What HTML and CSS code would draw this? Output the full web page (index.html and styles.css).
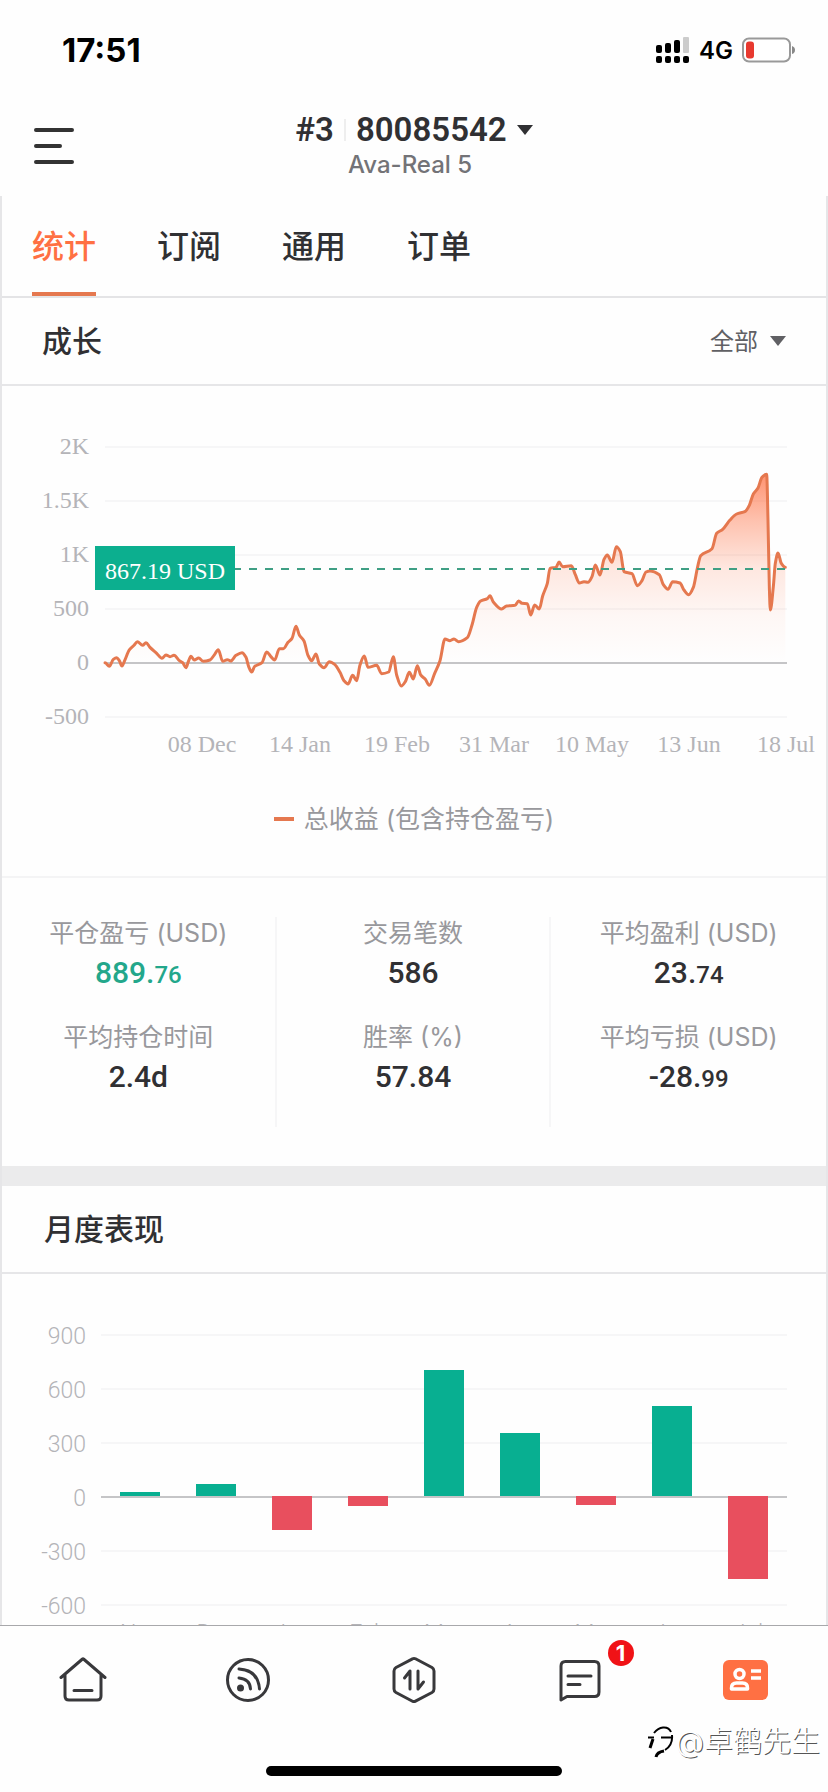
FILE: index.html
```html
<!DOCTYPE html>
<html lang="zh-CN">
<head>
<meta charset="utf-8">
<meta name="viewport" content="width=device-width, initial-scale=1">
<title>80085542 统计</title>
<link rel="stylesheet" href="styles.css">
</head>
<body>
<div class="status">
  <time class="clock">17:51</time>
  <div class="status-right">
    <svg width="34" height="28" viewBox="0 0 34 28" aria-hidden="true">
      <g fill="#000"><rect x="0" y="9" width="6" height="8" rx="2"/><rect x="9" y="7" width="6" height="10" rx="2"/><rect x="18" y="4" width="6" height="13" rx="2"/>
      <rect x="0" y="20" width="6" height="7" rx="2"/><rect x="9" y="20" width="6" height="7" rx="2"/><rect x="18" y="20" width="6" height="7" rx="2"/><rect x="27" y="20" width="6" height="7" rx="2"/></g>
      <rect x="27" y="1" width="6" height="16" rx="1" fill="#ccc"/>
    </svg>
    <span class="network">4G</span>
    <svg width="54" height="26" viewBox="0 0 54 26" aria-hidden="true">
      <rect x="1" y="1.5" width="47" height="23" rx="6" fill="#fff" stroke="#999" stroke-width="2"/>
      <rect x="4" y="4.500" width="8" height="17" rx="3" fill="#e8392f"/>
      <path d="M50 9q3 1 3 4t-3 4z" fill="#888"/>
    </svg>
  </div>
</div>

<header class="header">
  <button class="menu" aria-label="菜单">
    <svg width="40" height="36" viewBox="0 0 40 36" fill="none" stroke="#333" stroke-width="4" stroke-linecap="round"><path d="M2 2h36M2 18h24M2 34h36"/></svg>
  </button>
  <div class="account">
    <button class="account-pick"><span>#3</span><i class="bar"></i><span>80085542</span><svg class="arrow" width="16" height="10" viewBox="0 0 16 10"><path d="M0 0h16L8 10z" fill="currentColor"/></svg></button>
    <div class="server">Ava-Real 5</div>
  </div>
</header>

<main class="panel">
  <nav class="tabs">
    <button class="tab active">统计</button>
    <button class="tab">订阅</button>
    <button class="tab">通用</button>
    <button class="tab">订单</button>
  </nav>

  <section>
    <div class="head">
      <h2>成长</h2>
      <label class="range">
        <select aria-label="时间范围"><option>全部</option></select>
        <svg class="arrow" width="16" height="10" viewBox="0 0 16 10"><path d="M0 0h16L8 10z" fill="currentColor"/></svg>
      </label>
    </div>
    <svg class="chart growth" viewBox="2 386 824 400">
      <defs>
        <linearGradient id="fade" gradientUnits="userSpaceOnUse" x1="0" y1="163" x2="0" y2="728">
          <stop offset="0" stop-color="#ff7043" stop-opacity=".75"/>
          <stop offset=".25" stop-color="#ff7043" stop-opacity=".42"/>
          <stop offset=".5" stop-color="#ff7043" stop-opacity=".16"/>
          <stop offset=".75" stop-color="#ff7043" stop-opacity=".05"/>
          <stop offset="1" stop-color="#ff7043" stop-opacity="0"/>
        </linearGradient>
      </defs>
      <path class="grid" d="M105 447H787M105 501H787M105 555H787M105 609H787M105 717H787"/>
      <path class="zero" d="M105 663H787"/>
      <g class="ylab">
        <text x="89" y="454">2K</text><text x="89" y="508">1.5K</text><text x="89" y="562">1K</text>
        <text x="89" y="616">500</text><text x="89" y="670">0</text><text x="89" y="724">-500</text>
      </g>
      <g class="xlab">
        <text x="202" y="752">08 Dec</text><text x="300" y="752">14 Jan</text><text x="397" y="752">19 Feb</text><text x="494" y="752">31 Mar</text>
        <text x="592" y="752">10 May</text><text x="689" y="752">13 Jun</text><text x="786" y="752">18 Jul</text>
      </g>
      <g transform="translate(0 420) scale(.33333)">
        <path id="area" fill="url(#fade)"/>
        <path id="line" fill="none" stroke="#e5784f" stroke-width="9" stroke-linejoin="round" stroke-linecap="round"/>
      </g>
      <path d="M235 569H787" stroke="#3f9f84" stroke-width="2" stroke-dasharray="8 8" stroke-dashoffset="2"/>
      <rect x="95" y="546" width="140" height="44" fill="#0caf8f"/>
      <text class="tip" x="165" y="579">867.19 USD</text>
    </svg>
    <div class="legend"><i></i><span>总收益 (包含持仓盈亏)</span></div>
    <div class="stats">
      <dl><dt>平仓盈亏 (USD)</dt><dd class="up">889.<small>76</small></dd><dt>平均持仓时间</dt><dd>2.4d</dd></dl>
      <dl><dt>交易笔数</dt><dd>586</dd><dt>胜率 (%)</dt><dd>57.84</dd></dl>
      <dl><dt>平均盈利 (USD)</dt><dd>23.<small>74</small></dd><dt>平均亏损 (USD)</dt><dd>-28.<small>99</small></dd></dl>
    </div>
  </section>

  <section class="monthly">
    <div class="head"><h2>月度表现</h2></div>
    <svg class="chart" viewBox="2 1274 824 380">
      <path class="grid" d="M101 1335H787M101 1389H787M101 1443H787M101 1551H787M101 1605H787"/>
      <path class="zero" d="M101 1497H787"/>
      <g class="ylab thin">
        <text x="86" y="1344">900</text><text x="86" y="1398">600</text><text x="86" y="1452">300</text>
        <text x="86" y="1506">0</text><text x="86" y="1560">-300</text><text x="86" y="1614">-600</text>
      </g>
      <path fill="#08af91" d="M120 1492h40v4h-40zM196 1484h40v12h-40zM424 1370h40v126h-40zM500 1433h40v63h-40zM652 1406h40v90h-40z"/>
      <path fill="#e84f5e" d="M272 1496h40v34h-40zM348 1496h40v10h-40zM576 1496h40v9h-40zM728 1496h40v83h-40z"/>
      <g class="xlab thin">
        <text x="140" y="1641">Nov</text><text x="216" y="1641">Dec</text><text x="292" y="1641">Jan</text><text x="368" y="1641">Feb</text><text x="444" y="1641">Mar</text>
        <text x="520" y="1641">Apr</text><text x="596" y="1641">May</text><text x="672" y="1641">Jun</text><text x="748" y="1641">Jul</text>
      </g>
    </svg>
  </section>
</main>

<footer class="bottom">
  <nav class="dock">
    <a href="#home" aria-label="首页"><svg width="48" height="48" viewBox="0 0 48 48"><path d="M2 21.500 23.500 3Q24 2.500 24.500 3L46 21.500M6 18v22q0 4 4 4h28q4 0 4-4V18M15 34.500h18"/></svg></a>
    <a href="#feed" aria-label="动态"><svg width="48" height="48" viewBox="0 0 48 48"><circle cx="24" cy="24" r="20.500"/><path d="M15 13Q34 14 35.500 33M15 22Q26 23 26.500 33"/><circle cx="16.500" cy="32" r="3.500" class="solid"/></svg></a>
    <a href="#trade" aria-label="交易"><svg width="48" height="48" viewBox="0 0 48 48"><path d="M22.500 2.800Q24 2 25.500 2.800L42 11.500Q44 12.700 44 15V33Q44 35.300 42 36.500L25.500 45.200Q24 46 22.500 45.200L6 36.500Q4 35.300 4 33V15Q4 12.700 6 11.500ZM14.500 22 20 15V33M28 15V33L33.500 26"/></svg></a>
    <a href="#messages" aria-label="消息"><svg width="48" height="48" viewBox="0 0 48 48"><path d="M5 44V10q0-4.500 4.500-4.500h29Q43 5.500 43 10v26q0 4.500-4.500 4.500H11ZM12 20h23M12 28.500h12"/></svg><b class="badge">1</b></a>
    <a href="#account" aria-label="账户" aria-current="page"><svg width="48" height="48" viewBox="0 0 48 48"><rect x="2" y="4" width="45" height="40" rx="6" fill="#ff7043" stroke="none"/><g stroke="#fff" stroke-width="3.500" stroke-linecap="butt"><circle cx="18.500" cy="18" r="4.500"/><path d="M10.500 33v-1q0-5 5-5h6q5 0 5 5v1zM30 15h10M30 22h10"/></g></svg></a>
  </nav>
  <div class="watermark">
    <svg width="26" height="34" viewBox="0 0 26 34" fill="none" stroke="#000" stroke-width="2"><path d="M6 8Q10 3 15 2.500Q21 2 23 7M24 10Q25 20 17 25M0 12.500H6M13 12.500H24"/><path stroke-width="3" d="M5 14 2 23M16 26Q9 27 8 32"/></svg>
    <span>@卓鹤先生</span>
  </div>
  <div class="home-bar"></div>
</footer>
<script src="chart.js"></script>
</body>
</html>
```

FILE: styles.css
```css
* { box-sizing: border-box; }
body {
  margin: 0;
  height: 100vh;
  display: flex;
  flex-direction: column;
  background: #fefefe;
  color: #303033;
  font-family: Inter, "Noto Sans CJK SC", sans-serif;
}
button, select {
  appearance: none;
  margin: 0;
  padding: 0;
  border: 0;
  background: none;
  color: inherit;
  font: inherit;
}
svg { display: block; }
h2, dl, dd { margin: 0; }

.status {
  display: flex;
  justify-content: space-between;
  align-items: center;
  height: 100px;
  padding: 0 32px 0 62px;
  color: #000;
}
.clock { font-size: 33px; font-weight: 700; }
.status-right { display: flex; align-items: center; gap: 9px; }
.network { font-size: 24px; font-weight: 600; }

.header {
  display: grid;
  grid-template-columns: 1fr auto 1fr;
  height: 96px;
  padding: 0 34px;
}
.menu { align-self: start; justify-self: start; margin-top: 28px; }
.account { text-align: center; }
.account-pick {
  display: flex;
  align-items: center;
  margin: 10px auto 0;
  font: 600 33px/40px Roboto, sans-serif;
}
.account-pick .arrow { margin-left: 10px; }
.bar { width: 2px; height: 22px; margin: 0 10px; background: #eee; }
.server { padding-right: 8px; font-size: 24px; line-height: 30px; font-weight: 500; color: #737377; }

.panel {
  flex: 1;
  min-height: 0;
  overflow: hidden;
  border: solid #e6e6e8;
  border-width: 0 2px;
}
.tabs {
  display: flex;
  gap: 61px;
  padding: 0 30px;
  border-bottom: 2px solid #e4e4e6;
}
.tab {
  height: 100px;
  font-size: 32px;
  font-weight: 500;
  border-bottom: 4px solid transparent;
}
.tab.active { color: #ff7043; border-color: #e5784f; }

.head {
  display: flex;
  align-items: center;
  justify-content: space-between;
  height: 88px;
  padding: 0 40px;
  border-bottom: 2px solid #e6e6e8;
}
.head h2 { font-size: 30px; line-height: 40px; font-weight: 500; }
.range { display: flex; align-items: center; gap: 12px; font-size: 24px; color: #606064; }

.chart { width: 100%; height: auto; }
.grid { stroke: #f6f6f7; stroke-width: 2; }
.zero { stroke: #c5c5c7; stroke-width: 2; }
.ylab, .xlab { font: 24px "Liberation Serif", serif; fill: #b4b4b8; }
.ylab { text-anchor: end; }
.xlab { text-anchor: middle; }
.thin { font: 300 23px Roboto, sans-serif; }
.tip { font: 24px "Liberation Serif", serif; fill: #fff; text-anchor: middle; }

.legend {
  display: flex;
  justify-content: center;
  align-items: center;
  gap: 10px;
  height: 92px;
  padding-bottom: 24px;
  border-bottom: 2px solid #f4f4f5;
  font-size: 25px;
  line-height: 32px;
  color: #98989c;
}
.legend i { width: 20px; height: 4px; background: #e5784f; }

.stats {
  display: grid;
  grid-template-columns: repeat(3, 1fr);
  padding: 39px 0;
  text-align: center;
}
.stats dl { height: 210px; border-right: 2px solid #f6f6f7; }
.stats dl:last-child { border-right: 0; }
.stats dt { height: 32px; font-size: 25px; line-height: 32px; color: #98989c; }
.stats dd { height: 40px; margin: 4px 0 28px; font: 500 30px/40px Roboto, sans-serif; }
.stats small { font-size: 24px; }
.stats .up { color: #23a78b; }

.monthly { border-top: 20px solid #ebebec; }
.monthly .head { padding-left: 42px; }

.bottom { position: relative; height: 167px; border-top: 1px solid #a8a8ab; background: #fefefe; }
.dock { display: grid; grid-template-columns: repeat(5, 1fr); padding-top: 30px; }
.dock a { position: relative; display: flex; justify-content: center; }
.dock svg { fill: none; stroke: #38383b; stroke-width: 3; stroke-linecap: round; stroke-linejoin: round; }
.dock .solid { fill: #38383b; stroke: none; }
.badge {
  position: absolute;
  left: calc(50% + 28px);
  top: -16px;
  width: 26px;
  height: 26px;
  border-radius: 50%;
  background: #f01216;
  color: #fff;
  font: 700 22px/26px Inter, sans-serif;
  text-align: center;
}
.watermark {
  position: absolute;
  right: 8px;
  bottom: 30px;
  display: flex;
  align-items: center;
  gap: 2px;
  font-size: 29px;
  font-weight: 300;
  line-height: 40px;
  color: #fff;
  text-shadow: 1px 1px 0 #555;
}
.home-bar {
  position: absolute;
  left: 50%;
  bottom: 16px;
  width: 296px;
  height: 10px;
  margin-left: -148px;
  border-radius: 5px;
  background: #000;
}
```

FILE: chart.js
```js
// Growth curve points, in thirds of a chart unit.
const pts = `315,728 328,739 340,718 350,713 358,722 366,738 374,722 388,690 402,676 412,665 428,676 438,668 450,682 470,700 486,715 498,705 510,710 522,706 538,722 548,728 558,743 565,725 573,709 583,720 596,714 610,724 630,720 642,706 655,689 668,724 682,719 692,723 708,706 726,698 738,712 746,740 755,756 764,739 786,728 800,696 812,709 824,720 838,686 850,686 864,667 876,655 888,619 898,645 912,663 924,706 935,722 948,702 958,732 972,743 988,725 1004,733 1020,757 1032,782 1044,792 1058,766 1070,782 1080,735 1093,708 1104,742 1130,736 1145,761 1166,756 1180,710 1190,765 1204,798 1216,785 1228,757 1240,777 1252,737 1262,765 1276,778 1288,796 1304,760 1320,722 1335,657 1350,662 1362,657 1376,665 1402,653 1416,615 1430,562 1442,543 1462,536 1470,527 1480,546 1505,567 1520,558 1545,556 1556,543 1566,550 1582,551 1592,585 1604,555 1618,567 1628,528 1642,490 1650,445 1668,442 1677,426 1688,440 1714,437 1726,464 1738,489 1752,485 1764,487 1776,470 1786,435 1800,465 1812,418 1822,405 1836,427 1849,380 1861,395 1872,455 1896,461 1912,497 1926,482 1938,456 1950,453 1978,464 1990,494 2004,508 2018,485 2040,489 2052,510 2066,524 2080,502 2092,445 2102,407 2136,386 2150,340 2168,328 2190,300 2210,282 2236,274 2248,256 2260,222 2274,204 2286,172 2300,163 2304,300 2308,500 2311,570 2320,500 2326,430 2334,399 2344,430 2356,442`
  .split(' ').map(p => p.split(',').map(Number));

// Monotone slopes keep the curve from overshooting its peaks.
const slope = (a, b) => (b[1] - a[1]) / (b[0] - a[0]);
const tangents = pts.map((p, i) => {
  if (i === 0 || i === pts.length - 1) return 0;
  const l = slope(pts[i - 1], p), r = slope(p, pts[i + 1]);
  return l * r <= 0 ? 0 : 2 * l * r / (l + r);
});
let d = 'M' + pts[0];
for (let i = 1; i < pts.length; i++) {
  const a = pts[i - 1], b = pts[i], h = (b[0] - a[0]) / 3;
  d += `C${a[0] + h} ${a[1] + h * tangents[i - 1]} ${b[0] - h} ${b[1] - h * tangents[i]} ${b[0]} ${b[1]}`;
}
document.getElementById('line').setAttribute('d', d);
document.getElementById('area').setAttribute('d', d + 'V728H315Z');
```
